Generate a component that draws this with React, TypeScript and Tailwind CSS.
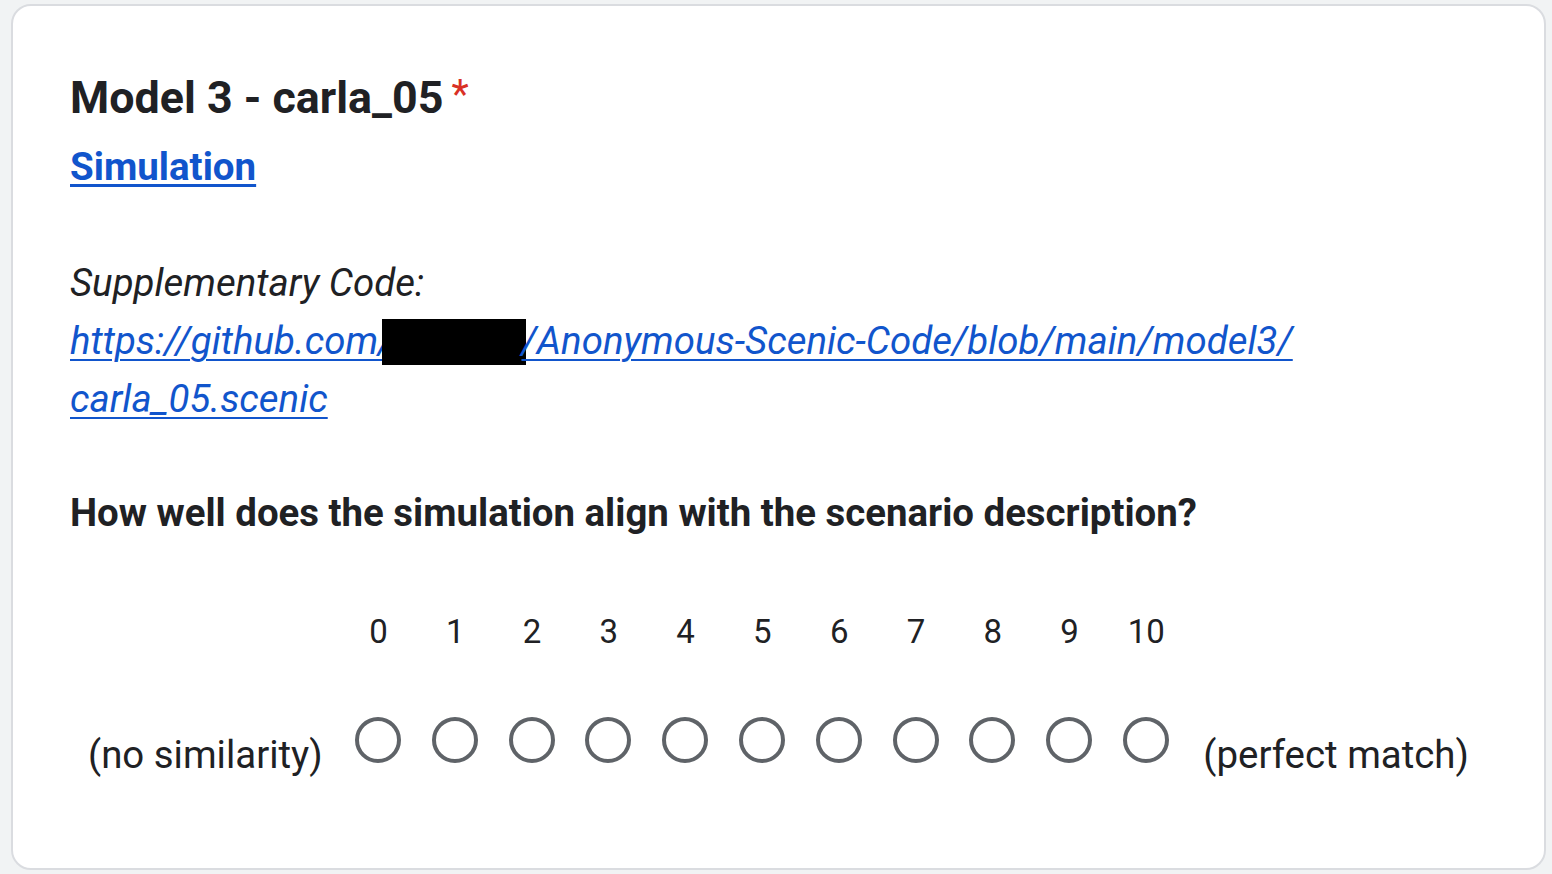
const scale = ["0", "1", "2", "3", "4", "5", "6", "7", "8", "9", "10"];

const App = () => {
  return (
    <div className="w-[1552px] h-[874px] bg-[#f1f3f4] pt-[4px] pl-[11px] font-['Roboto',sans-serif] text-[#202124]">
      <div className="w-[1535px] h-[866px] bg-white border-2 border-[#dadce0] rounded-[20px] pl-[57px] pt-[62px]">
        <h2 className="text-[44.8px] font-bold leading-[60px] flex items-start">
          <span>Model 3 - carla_05</span>
          <span className="text-[#d93025] font-normal text-[40px] leading-[40px] ml-[8px] mt-[7px]">*</span>
        </h2>
        <a href="#" className="block w-fit mt-[14px] text-[38.5px] font-bold leading-[50px] text-[#1155cc] underline underline-offset-[4px] decoration-[3px]">
          Simulation
        </a>

        <div className="mt-[62px] text-[38.4px] leading-[58px]">
          <div className="italic">Supplementary Code:</div>
          <a href="#" className="italic text-[#1155cc] underline underline-offset-[5px] decoration-[2px]">
            https://github.com/
            <span className="inline-block align-[-11px] w-[144px] h-[46px] bg-black -ml-[11px] -mr-[5px]" />
            /Anonymous-Scenic-Code/blob/main/model3/
            <br />
            carla_05.scenic
          </a>
        </div>

        <h3 className="mt-[56px] text-[38.4px] font-bold leading-[58px]">
          How well does the simulation align with the scenario description?
        </h3>

        <div className="mt-[70px] flex pl-[270px]">
          {scale.map((n) => (
            <div key={n} className="w-[76.8px] text-center text-[33px] leading-[40px]">
              {n}
            </div>
          ))}
        </div>

        <div className="mt-[50px] flex items-center pl-[18px]">
          <span className="text-[38.4px] leading-[46px] mt-[30px] w-[251.6px]">(no similarity)</span>
          {scale.map((n) => (
            <div key={n} className="w-[76.8px] flex justify-center">
              <div className="w-[46px] h-[46px] rounded-full border-[4.5px] border-[#5f6368]" />
            </div>
          ))}
          <span className="text-[38.4px] leading-[46px] mt-[30px] ml-[19px]">(perfect match)</span>
        </div>
      </div>
    </div>
  );
};

export default App;
